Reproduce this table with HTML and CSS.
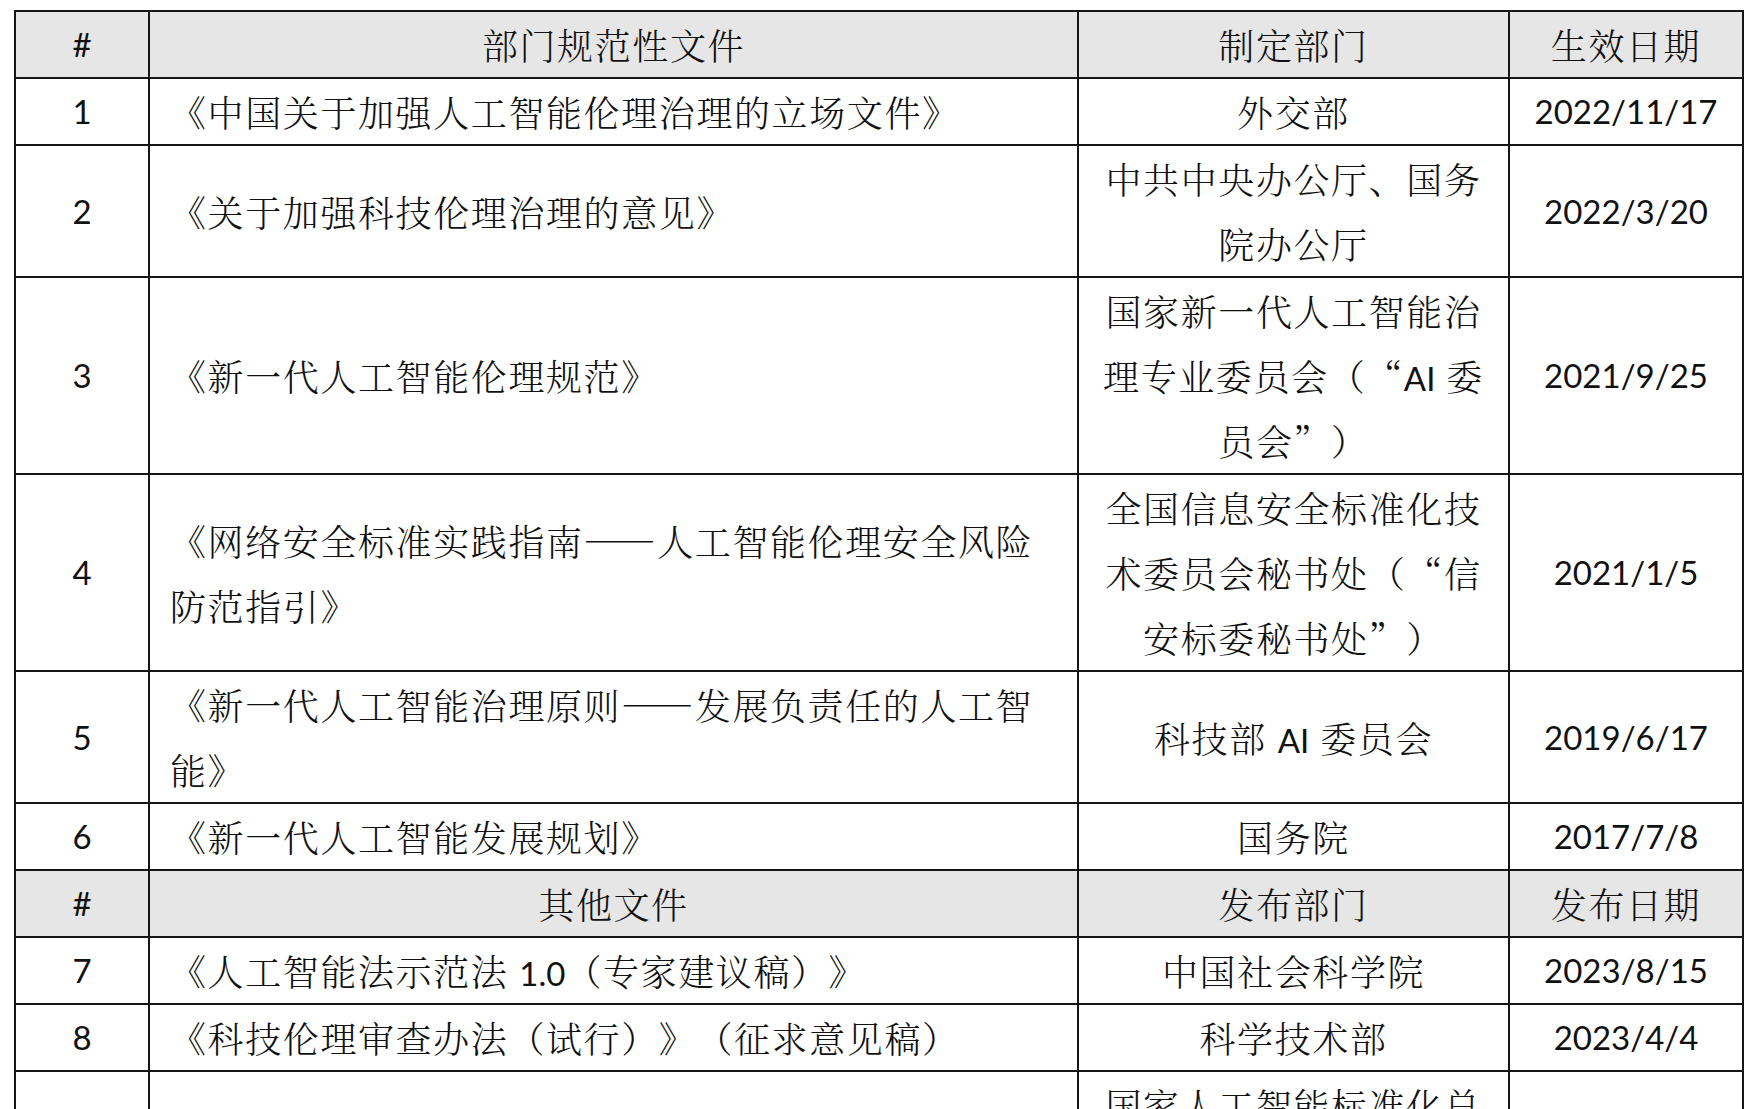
FILE: index.html
```html
<!DOCTYPE html>
<html lang="zh-CN">
<head>
<meta charset="utf-8">
<title>人工智能伦理治理文件</title>
<link rel="stylesheet" href="styles.css">
</head>
<body>
<table class="doc-table">
  <colgroup>
    <col class="col-no">
    <col class="col-title">
    <col class="col-dept">
    <col class="col-date">
  </colgroup>
  <tbody>
    <tr class="head">
      <td class="num">#</td>
      <td>部门规范性文件</td>
      <td>制定部门</td>
      <td>生效日期</td>
    </tr>
    <tr>
      <td class="num">1</td>
      <td class="title">《中国关于加强人工智能伦理治理的立场文件》</td>
      <td>外交部</td>
      <td class="num">2022/11/17</td>
    </tr>
    <tr>
      <td class="num">2</td>
      <td class="title">《关于加强科技伦理治理的意见》</td>
      <td>中共中央办公厅、国务<br>院办公厅</td>
      <td class="num">2022/3/20</td>
    </tr>
    <tr>
      <td class="num">3</td>
      <td class="title">《新一代人工智能伦理规范》</td>
      <td>国家新一代人工智能治<br>理专业委员会（“<span class="lat">AI</span> 委<br>员会”）</td>
      <td class="num">2021/9/25</td>
    </tr>
    <tr>
      <td class="num">4</td>
      <td class="title">《网络安全标准实践指南——人工智能伦理安全风险<br>防范指引》</td>
      <td>全国信息安全标准化技<br>术委员会秘书处（“信<br>安标委秘书处”）</td>
      <td class="num">2021/1/5</td>
    </tr>
    <tr>
      <td class="num">5</td>
      <td class="title">《新一代人工智能治理原则——发展负责任的人工智<br>能》</td>
      <td>科技部 <span class="lat">AI</span> 委员会</td>
      <td class="num">2019/6/17</td>
    </tr>
    <tr>
      <td class="num">6</td>
      <td class="title">《新一代人工智能发展规划》</td>
      <td>国务院</td>
      <td class="num">2017/7/8</td>
    </tr>
    <tr class="head">
      <td class="num">#</td>
      <td>其他文件</td>
      <td>发布部门</td>
      <td>发布日期</td>
    </tr>
    <tr>
      <td class="num">7</td>
      <td class="title">《人工智能法示范法 <span class="lat">1.0</span>（专家建议稿）》</td>
      <td>中国社会科学院</td>
      <td class="num">2023/8/15</td>
    </tr>
    <tr>
      <td class="num">8</td>
      <td class="title">《科技伦理审查办法（试行）》（征求意见稿）</td>
      <td>科学技术部</td>
      <td class="num">2023/4/4</td>
    </tr>
    <tr>
      <td class="num">9</td>
      <td class="title">《人工智能伦理治理标准化指南》</td>
      <td>国家人工智能标准化总<br>体组、全国信标委人工<br>智能分委会</td>
      <td class="num">2023/3/1</td>
    </tr>
  </tbody>
</table>
</body>
</html>
```
FILE: styles.css
```css
html, body {
  margin: 0;
  padding: 0;
  background: #ffffff;
}

.doc-table {
  border-collapse: collapse;
  table-layout: fixed;
  width: 1728px;
  margin: 10px 0 0 14px;
  font-family: "Noto Serif CJK SC", "Noto Sans CJK SC", serif;
  font-size: 36px;
  font-weight: 300;
  letter-spacing: 1.6px;
  color: #111111;
  text-spacing-trim: space-all;
}

.col-no { width: 134px; }
.col-title { width: 929px; }
.col-dept { width: 431px; }
.col-date { width: 234px; }

.doc-table td {
  border: 2px solid #151515;
  padding: 0 8px;
  height: 65px;
  line-height: 65px;
  text-align: center;
  vertical-align: middle;
  white-space: nowrap;
}

.doc-table td.title {
  text-align: left;
  padding-left: 20px;
  padding-right: 12px;
}

.doc-table .head td {
  background: #e7e6e6;
}

.doc-table td.num,
.lat {
  font-family: Lato, "Liberation Sans", sans-serif;
  font-size: 33px;
  font-weight: 400;
  letter-spacing: 0;
}

.lat {
  line-height: 0;
}
```
